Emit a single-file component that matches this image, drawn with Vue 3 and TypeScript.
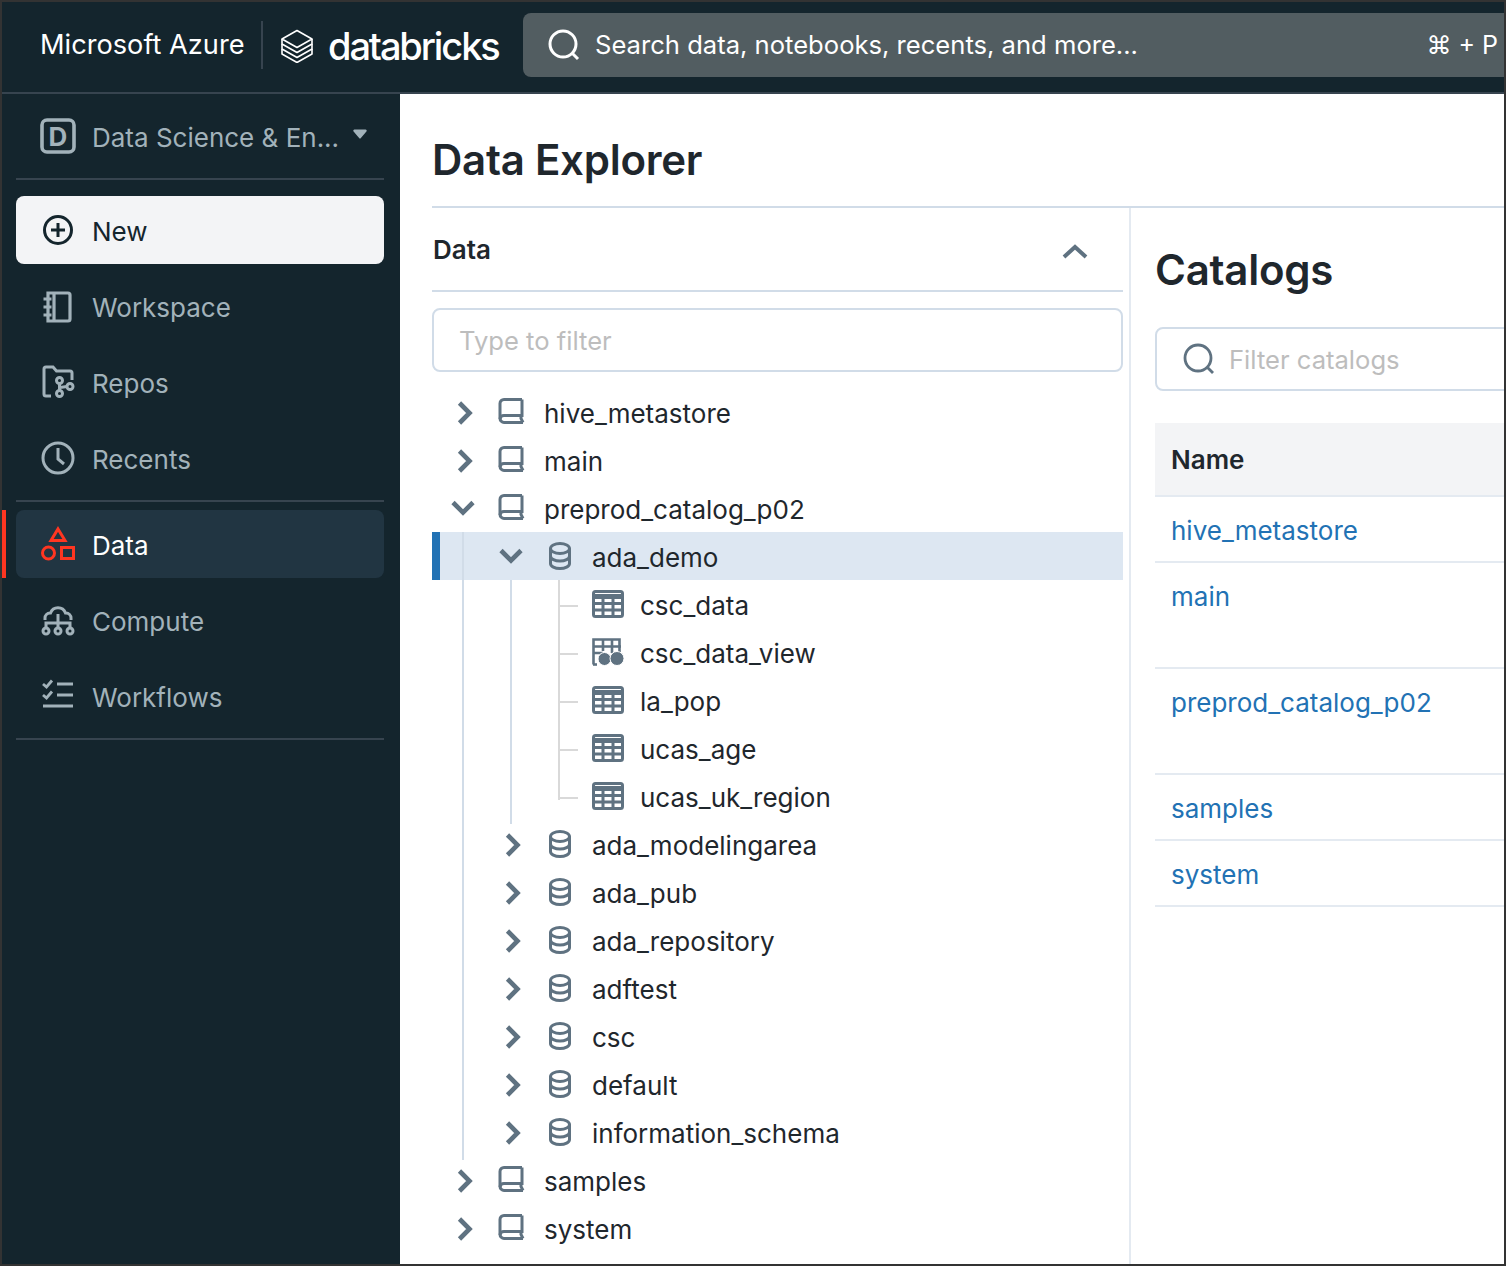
<template>
  <div class="frame">
    <header class="topbar">
      <div class="brand">Microsoft Azure</div>
      <div class="logo">
        <svg class="stack" viewBox="0 0 34 34" fill="none" stroke="#fff" stroke-width="1.6" stroke-linejoin="round">
          <path d="M17 1.5 32 10 17 18.5 2 10z" />
          <path d="M2 10v5l15 8.5L32 15v-5" />
          <path d="M2 15v5l15 8.5L32 20v-5" />
          <path d="M2 20v5l15 8.5L32 25v-5" />
        </svg>
        <span class="wordmark">databricks</span>
      </div>
      <div class="search">
        <svg class="search-icon" viewBox="0 0 32 32" fill="none" stroke="#fff" stroke-width="3">
          <circle cx="15" cy="15" r="13" />
          <path d="m24 24 6 6" />
        </svg>
        <span class="search-text">Search data, notebooks, recents, and more...</span>
        <span class="shortcut">⌘ + P</span>
      </div>
    </header>

    <div class="body">
      <aside class="sidebar">
        <div class="persona">
          <svg class="nav-icon" viewBox="0 0 36 36" fill="none">
            <rect x="2" y="2" width="32" height="32" rx="5" stroke="#a2b2ba" stroke-width="3.6" />
            <text x="18" y="27.500" text-anchor="middle" font-size="26" font-weight="700" fill="#a2b2ba" font-family="Inter, sans-serif">D</text>
          </svg>
          <span class="persona-name">Data Science &amp; En...</span>
          <svg class="caret" viewBox="0 0 14 10"><path d="M1.500 0.500h11a1.200 1.200 0 0 1 .9 2L7.900 9.100a1.200 1.200 0 0 1-1.800 0L0.600 2.500a1.200 1.200 0 0 1 .9-2z" fill="#a2b2ba" /></svg>
        </div>
        <div class="divider first"></div>

        <div class="new-btn">
          <svg class="nav-icon" viewBox="0 0 36 36" fill="none" stroke="#14252d" stroke-width="3">
            <circle cx="18" cy="18" r="13.500" />
            <path d="M18 11v14M11 18h14" />
          </svg>
          <span>New</span>
        </div>

        <div class="nav-item">
          <svg class="nav-icon" viewBox="0 0 36 36" fill="none" stroke="#a2b2ba" stroke-width="3.2">
            <path d="M8 5h20a2 2 0 0 1 2 2v24a2 2 0 0 1-2 2H8zM14 5v28M3.500 11h8M3.500 19h8M3.500 27h8" />
          </svg>
          <span>Workspace</span>
        </div>
        <div class="nav-item">
          <svg class="nav-icon" viewBox="0 0 36 36" fill="none" stroke="#a2b2ba" stroke-width="3">
            <path d="M11 32H6a2 2 0 0 1-2-2V5a2 2 0 0 1 2-2h7l3.500 4H30a2 2 0 0 1 2 2v7" />
            <circle cx="19.500" cy="16.500" r="3" />
            <circle cx="19.500" cy="29.500" r="3" />
            <circle cx="30" cy="22.500" r="3" />
            <path d="M19.500 19.500v7M20 23.500l7-1" />
          </svg>
          <span>Repos</span>
        </div>
        <div class="nav-item">
          <svg class="nav-icon" viewBox="0 0 36 36" fill="none" stroke="#a2b2ba" stroke-width="3">
            <circle cx="18" cy="18" r="15" />
            <path d="M18 8v11l6 5" />
          </svg>
          <span>Recents</span>
        </div>
        <div class="divider"></div>

        <div class="nav-item active">
          <svg class="nav-icon" viewBox="0 0 36 36" fill="none" stroke="#ff3621" stroke-width="3">
            <path d="M18 3 25 14.500H11z" />
            <circle cx="8.500" cy="27" r="6" />
            <rect x="21.500" y="21.500" width="12" height="11" />
          </svg>
          <span>Data</span>
        </div>
        <div class="nav-item">
          <svg class="nav-icon" viewBox="0 0 36 36" fill="none" stroke="#a2b2ba" stroke-width="3">
            <path d="M5 18v-2a5 5 0 0 1 5-5h.5a8 8 0 0 1 15 0h.5a5 5 0 0 1 5 5v2" />
            <path d="M6 25v-4h24v4M18 12v13" />
            <circle cx="6" cy="29" r="3" />
            <circle cx="18" cy="29" r="3" />
            <circle cx="30" cy="29" r="3" />
          </svg>
          <span>Compute</span>
        </div>
        <div class="nav-item">
          <svg class="nav-icon" viewBox="0 0 36 36" fill="none" stroke="#a2b2ba" stroke-width="2.800">
            <path d="m3 6 3.500 3L12 2.500M3 17l3.500 3L12 13.500" />
            <path d="M17 6h16M17 17h16" stroke-width="3" />
            <path d="M3 28h30" stroke-width="3" />
          </svg>
          <span>Workflows</span>
        </div>
        <div class="divider last"></div>
      </aside>

      <main class="main">
        <h1 class="page-title">Data Explorer</h1>
        <div class="columns">
          <section class="tree-pane">
            <div class="tree-head">
              <span>Data</span>
              <svg class="tree-collapse" viewBox="0 0 28 16" fill="none" stroke="#5f7281" stroke-width="4">
                <path d="m3 14 11-10 11 10" />
              </svg>
            </div>
            <div class="filter">Type to filter</div>

            <div class="tree">
              <!-- nested guides sit over the rows, hence absolute -->
              <div class="guide guide-catalog"></div>
              <div class="guide guide-schema"></div>
              <div class="guide guide-table"></div>
              <div
                v-for="row in rows"
                :key="row.name"
                class="row"
                :class="[`lv${row.level}`, { selected: row.selected }]"
              >
                <svg v-if="row.level < 2" class="chev" :class="{ open: row.open }" viewBox="0 0 32 32" fill="none" stroke="#5f7281" stroke-width="4.600">
                  <path d="m10.500 7 10 10-10 10" />
                </svg>
                <span v-else class="tick"></span>

                <svg v-if="row.kind === 'catalog'" class="row-icon" viewBox="0 0 30 30" fill="none" stroke="#5f7281" stroke-width="3">
                  <path d="M26 2.500H8a4 4 0 0 0-4 4v15c0 2 2 4 4 4h19" />
                  <path d="M26 2.500v16H8a4 4 0 0 0-4 3.500M25 18.500v3l2 4" />
                </svg>
                <svg v-else-if="row.kind === 'schema'" class="row-icon schema" viewBox="0 0 30 30" fill="none" stroke="#5f7281" stroke-width="3">
                  <ellipse cx="15" cy="7.500" rx="9.500" ry="5" />
                  <path d="M5.500 7.500v15c0 3 4.500 5 9.500 5s9.500-2 9.500-5v-15M5.500 15c0 3 4.500 5 9.500 5s9.500-2 9.500-5" />
                </svg>
                <svg v-else-if="row.kind === 'table'" class="row-icon wide" viewBox="0 0 32 28" fill="none" stroke="#5f7281" stroke-width="3">
                  <rect x="1.500" y="1.500" width="29" height="25" rx="2" />
                  <path d="M1 6.500h30" stroke-width="5" />
                  <path d="M1 13.500h30M1 20h30M11 8v18M21 8v18" />
                </svg>
                <svg v-else class="row-icon wide" viewBox="0 0 32 28" fill="none" stroke="#5f7281" stroke-width="2.600">
                  <path d="M1.500 26.500V1.500h26V15M1 8.500h28M1 15h10M11 2v11M20 2v13" />
                  <path d="M1 26.500h4" />
                  <circle cx="12.500" cy="21" r="6.500" fill="#5f7281" stroke="#fff" stroke-width="1" />
                  <circle cx="25" cy="20.500" r="7" fill="#5f7281" stroke="#fff" stroke-width="1" />
                </svg>

                <span class="row-name">{{ row.name }}</span>
              </div>
            </div>
          </section>

          <section class="detail-pane">
            <h2 class="detail-title">Catalogs</h2>
            <div class="catalog-filter">
              <svg class="catalog-search" viewBox="0 0 32 32" fill="none" stroke="#5f7281" stroke-width="2.800">
                <circle cx="15" cy="15" r="13" />
                <path d="m24 24 6 6" />
              </svg>
              <span>Filter catalogs</span>
            </div>
            <div class="table-head">Name</div>
            <a v-for="c in catalogs" :key="c.name" class="table-row" :class="{ tall: c.tall }">{{ c.name }}</a>
          </section>
        </div>
      </main>
    </div>
  </div>
</template>

<script setup lang="ts">
interface TreeRow {
  name: string;
  level: number;
  kind: "catalog" | "schema" | "table" | "view";
  open?: boolean;
  selected?: boolean;
}

const rows: TreeRow[] = [
  { name: "hive_metastore", level: 0, kind: "catalog" },
  { name: "main", level: 0, kind: "catalog" },
  { name: "preprod_catalog_p02", level: 0, kind: "catalog", open: true },
  { name: "ada_demo", level: 1, kind: "schema", open: true, selected: true },
  { name: "csc_data", level: 2, kind: "table" },
  { name: "csc_data_view", level: 2, kind: "view" },
  { name: "la_pop", level: 2, kind: "table" },
  { name: "ucas_age", level: 2, kind: "table" },
  { name: "ucas_uk_region", level: 2, kind: "table" },
  { name: "ada_modelingarea", level: 1, kind: "schema" },
  { name: "ada_pub", level: 1, kind: "schema" },
  { name: "ada_repository", level: 1, kind: "schema" },
  { name: "adftest", level: 1, kind: "schema" },
  { name: "csc", level: 1, kind: "schema" },
  { name: "default", level: 1, kind: "schema" },
  { name: "information_schema", level: 1, kind: "schema" },
  { name: "samples", level: 0, kind: "catalog" },
  { name: "system", level: 0, kind: "catalog" }
];

const catalogs = [
  { name: "hive_metastore", tall: false },
  { name: "main", tall: true },
  { name: "preprod_catalog_p02", tall: true },
  { name: "samples", tall: false },
  { name: "system", tall: false }
];
</script>

<style>
html,
body {
  margin: 0;
  background: #333;
}
</style>

<style scoped>
.frame {
  box-sizing: border-box;
  width: 1506px;
  height: 1266px;
  border: 2px solid #333;
  overflow: hidden;
  background: #fff;
  display: flex;
  flex-direction: column;
  font-family: Inter, "Liberation Sans", sans-serif;
  font-size: 26px;
  color: #1f272d;
}

.topbar {
  flex: none;
  box-sizing: border-box;
  height: 92px;
  background: #14252d;
  border-bottom: 2px solid #37444f;
  display: flex;
  align-items: flex-start;
  color: #fff;
}

.brand {
  flex: none;
  margin-top: 19px;
  height: 48px;
  width: 261px;
  box-sizing: border-box;
  padding-left: 38px;
  line-height: 48px;
  font-size: 27.2px;
  border-right: 2px solid #37444f;
  white-space: nowrap;
}

.logo {
  display: flex;
  align-items: center;
  gap: 14px;
  margin: 26px 0 0 17px;
  height: 36px;
  width: 243px;
  flex: none;
}

.stack {
  flex: none;
  width: 34px;
  height: 34px;
}

.wordmark {
  font-size: 38px;
  font-weight: 500;
  letter-spacing: -2.1px;
  line-height: 36px;
}

.search {
  flex: 1;
  min-width: 0;
  height: 64px;
  margin: 11px 0 0 0;
  background: #525d61;
  border-radius: 8px 0 0 8px;
  display: flex;
  align-items: center;
  padding: 0 6px 0 25px;
}

.search-icon {
  width: 32px;
  height: 32px;
  flex: none;
}

.search-text {
  margin-left: 15px;
  flex: 1;
  font-size: 25.6px;
  padding-bottom: 2px;
  white-space: nowrap;
}

.shortcut {
  white-space: nowrap;
  font-size: 25px;
  padding-bottom: 1px;
}

.body {
  flex: 1;
  min-height: 0;
  display: flex;
}

.sidebar {
  flex: none;
  box-sizing: border-box;
  width: 398px;
  background: #14252d;
  padding: 0 16px 0 14px;
  color: #a2b2ba;
}

.persona {
  height: 84px;
  display: flex;
  align-items: center;
  padding-left: 24px;
  gap: 16px;
  white-space: nowrap;
}

.persona-name,
.new-btn span,
.nav-item span {
  padding-top: 2px;
}

.caret {
  width: 14px;
  height: 10px;
  margin-left: -2px;
  margin-top: -4px;
}

.nav-icon {
  flex: none;
  width: 36px;
  height: 36px;
}

.divider {
  height: 2px;
  background: #37444f;
  margin-bottom: 8px;
}

.divider.first {
  margin-bottom: 16px;
}

.divider.last {
  margin-top: 8px;
}

.new-btn,
.nav-item {
  box-sizing: border-box;
  height: 68px;
  display: flex;
  align-items: center;
  gap: 16px;
  padding-left: 24px;
  border-radius: 8px;
}

.new-btn {
  background: #f3f4f6;
  color: #14252d;
  margin-bottom: 8px;
}

.nav-item {
  margin-bottom: 8px;
}

.nav-item.active {
  position: relative;
  background: #213542;
  color: #fff;
}

.nav-item.active::before {
  content: "";
  position: absolute;
  left: -14px;
  top: 0;
  bottom: 0;
  width: 4px;
  background: #ff3621;
}

.main {
  flex: 1;
  min-width: 0;
  padding-left: 32px;
  display: flex;
  flex-direction: column;
}

.page-title {
  margin: 0;
  height: 112px;
  line-height: 132px;
  font-size: 42px;
  font-weight: 600;
  letter-spacing: -0.25px;
}

.columns {
  flex: 1;
  min-height: 0;
  display: flex;
  border-top: 2px solid #d1dce8;
}

.tree-pane {
  flex: none;
  box-sizing: border-box;
  width: 699px;
  border-right: 2px solid #e4eaf1;
  padding-right: 6px;
}

.tree-head {
  box-sizing: border-box;
  height: 84px;
  border-bottom: 2px solid #d1dce8;
  display: flex;
  align-items: center;
  justify-content: space-between;
  padding: 0 34px 0 1px;
  font-weight: 600;
}

.tree-collapse {
  width: 28px;
  height: 16px;
  margin-top: 4px;
}

.filter {
  box-sizing: border-box;
  height: 64px;
  margin-top: 16px;
  border: 2px solid #d1dce8;
  border-radius: 8px;
  padding-left: 25px;
  line-height: 62px;
  font-size: 25.6px;
  color: #bdbdbd;
}

.tree {
  position: relative;
  margin-top: 16px;
}

.row {
  position: relative;
  height: 48px;
  display: flex;
  align-items: center;
  white-space: nowrap;
}

.row.lv0 {
  padding-left: 17px;
}

.row.lv1 {
  padding-left: 65px;
}

.row.lv2 {
  padding-left: 113px;
}

.row.selected {
  background: #dde7f2;
  box-shadow: inset 8px 0 0 #2272b4;
}

.row-name {
  padding-top: 2px;
}

.chev {
  flex: none;
  width: 32px;
  height: 32px;
}

.chev.open {
  transform: rotate(90deg) translateY(1px);
}

.tick {
  flex: none;
  width: 32px;
}

.row-icon {
  flex: none;
  width: 30px;
  height: 30px;
  margin: 0 18px 0 15px;
}

.row-icon.schema {
  margin: 0 17px 0 16px;
}

.row-icon.wide {
  width: 32px;
  height: 28px;
  margin: 0 16px 0 15px;
}

.guide {
  position: absolute;
  z-index: 1;
  width: 2px;
  background: #d1dce8;
}

.guide-catalog {
  left: 30px;
  top: 144px;
  height: 628px;
}

.guide-schema {
  left: 78px;
  top: 192px;
  height: 244px;
}

.guide-table {
  left: 126px;
  top: 192px;
  height: 220px;
  background: #d9d9d9;
}

.row.lv2 .tick {
  position: relative;
}

.row.lv2 .tick::before {
  content: "";
  position: absolute;
  left: 15px;
  top: 1px;
  width: 18px;
  height: 2px;
  background: #d9d9d9;
}

.detail-pane {
  flex: 1;
  min-width: 0;
  padding-left: 24px;
}

.detail-title {
  margin: 0;
  height: 119px;
  line-height: 124px;
  font-size: 42px;
  font-weight: 600;
  letter-spacing: -0.25px;
}

.catalog-filter {
  box-sizing: border-box;
  width: 420px;
  height: 64px;
  border: 2px solid #d1dce8;
  border-radius: 8px;
  display: flex;
  align-items: center;
  gap: 14px;
  padding-left: 26px;
  font-size: 25.6px;
  color: #bdbdbd;
  white-space: nowrap;
}

.catalog-search {
  width: 32px;
  height: 32px;
  flex: none;
}

.table-head {
  box-sizing: border-box;
  height: 74px;
  margin-top: 32px;
  background: #f3f4f6;
  border-bottom: 2px solid #e4eaf1;
  padding-left: 16px;
  line-height: 74px;
  font-weight: 600;
}

.table-row {
  display: block;
  box-sizing: border-box;
  height: 66px;
  border-bottom: 2px solid #e4eaf1;
  padding-left: 16px;
  line-height: 68px;
  color: #2272b4;
  white-space: nowrap;
}

.table-row.tall {
  height: 106px;
}
</style>
